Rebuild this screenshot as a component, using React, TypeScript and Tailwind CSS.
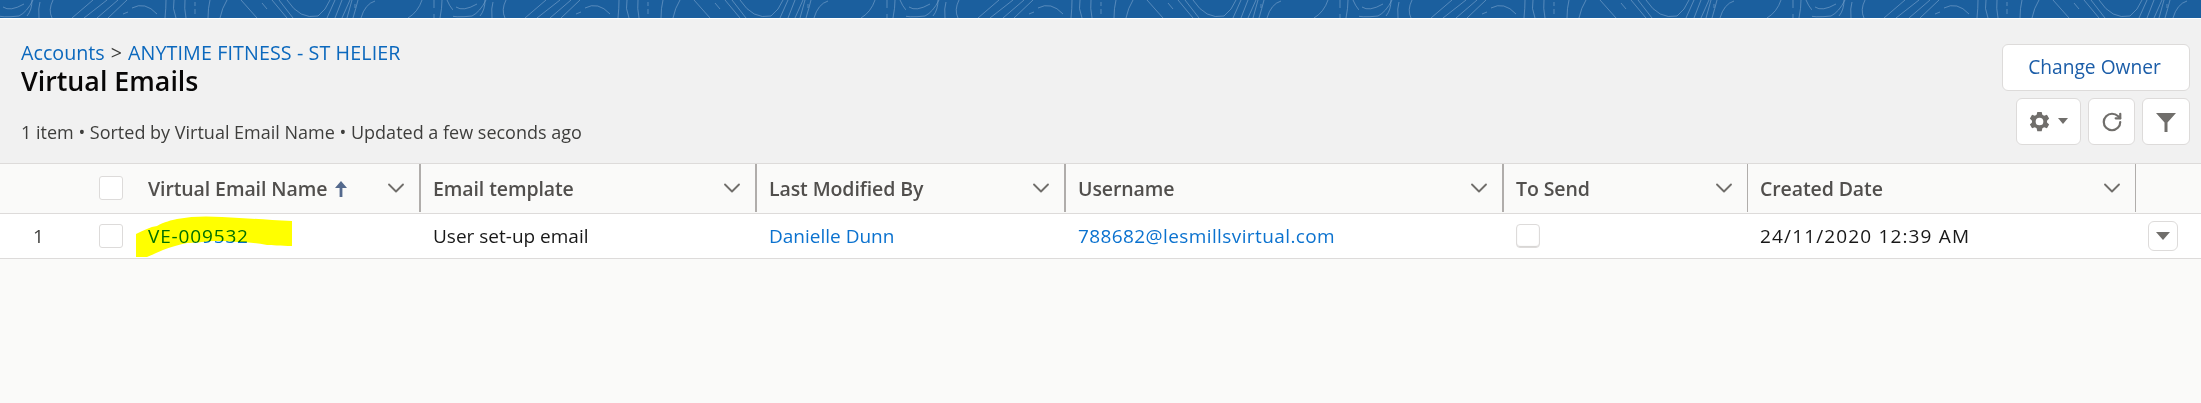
import React from "react";
import { ChevronDown, RotateCw } from "lucide-react";

const sans = "font-['Open_Sans','Noto_Sans',sans-serif]";

// Curves of the topographic banner, the tile repeats every 453px
const BannerCurves = () => (
  <svg className="block h-[18px] w-full" aria-hidden="true">
    <defs>
      <pattern id="topo" width="453" height="18" patternUnits="userSpaceOnUse">
        <g fill="none" stroke="#6f9cc8" strokeOpacity="0.7" strokeWidth="1">
          <path d="M3 7 Q10 12 24 4" />
          <path d="M27 16 Q32 10 32 0" />
          <path d="M39 18 Q38 8 40 2" />
          <path d="M52 18 Q48 10 53 0" />
          <path d="M72 18 L93 0" />
          <path d="M84 18 L107 0" />
          <path d="M97 18 L118 0" />
          <path d="M108 18 L127 0" />
          <path d="M123 14 L128 12" />
          <path d="M132 8 Q145 1 157 14" />
          <path d="M165 18 Q166 8 166 0" />
          <path d="M176 18 Q172 8 174 0" />
          <path d="M186 18 Q184 8 185 0" />
          <path d="M195 14 V9 M195 6 V2" />
          <path d="M208 18 Q208 8 210 0" />
          <path d="M220 18 Q222 8 227 0" />
          <path d="M241 0 L257 18" />
          <path d="M262 3 L267 9" />
          <path d="M272 0 L287 18" />
          <path d="M279 0 L293 18" />
          <path d="M287 0 Q300 20 318 16 Q326 10 330 0" />
          <path d="M327 18 L335 0" />
          <path d="M335 18 L342 0" />
          <path d="M342 18 L350 0" />
          <path d="M347 18 L352 0" />
          <path d="M355 8 V4" />
          <path d="M353 18 Q356 8 358 0" />
          <path d="M361 18 Q365 4 375 1" />
          <path d="M408 18 Q418 12 422 0" />
          <path d="M434 18 V14 M434 8 V0" />
          <path d="M440 18 Q442 8 442 0" />
          <path d="M447 0 Q452 12 460 15" />
          <path d="M-6 15 Q2 18 19 16 Q27 12 33 0" />
        </g>
      </pattern>
    </defs>
    <rect width="100%" height="18" fill="#1b5f9e" />
    <rect width="100%" height="18" fill="url(#topo)" />
  </svg>
);

const IconButton = ({ children, className }: { children: React.ReactNode; className: string }) => (
  <button className={`flex h-[47px] items-center justify-center rounded-md border border-[#dddbda] bg-white ${className}`}>
    {children}
  </button>
);

const Checkbox = ({ className = "" }: { className?: string }) => (
  <span className={`block h-[24px] w-[24px] rounded-[3px] border border-[#dddbda] bg-white ${className}`} />
);

const columns = [
  { label: "Email template", line: "border-[#b0adab] border-r-2" },
  { label: "Last Modified By", line: "border-[#b0adab] border-r-2" },
  { label: "Username", line: "border-[#b0adab] border-r-2" },
  { label: "To Send", line: "border-[#b0adab] border-r" },
  { label: "Created Date", line: "border-[#b0adab] border-r" },
];

const HeaderCell = ({ label, line, sorted }: { label: string; line: string; sorted?: boolean }) => (
  <div className={`flex h-[48px] items-center justify-between pr-[9px] ${sorted ? "pl-[13px]" : "pl-[12px]"} ${line}`}>
    <span className="flex items-center gap-[8px] pt-[1px] text-[19.5px] font-semibold tracking-[-0.1px] text-[#514f4d]">
      {label}
      {sorted && (
        <svg viewBox="0 0 12 16" className="h-[16px] w-[12px]" fill="#54698d">
          <path d="M6 0l6 7H7.4v9H4.6V7H0z" />
        </svg>
      )}
    </span>
    <ChevronDown className="h-[28px] w-[28px] text-[#706e6b]" strokeWidth={1.6} />
  </div>
);

export default function App() {
  return (
    <div className={`flex h-[403px] w-[2201px] flex-col overflow-hidden bg-[#fafaf9] ${sans}`}>
      <BannerCurves />
      <div className="h-px bg-white" />

      <header className="flex h-[145px] justify-between border-b border-[#dddbda] bg-[#f1f1f1] pl-[21px] pr-[11px]">
        <div className="flex flex-col pt-[21px]">
          <div className="flex items-center gap-[6px] text-[19.7px] leading-[25px] text-[#0b68bd]">
            <span>Accounts</span>
            <span className="text-[#3e3e3c]">&gt;</span>
            <span className="tracking-[0.1px]">ANYTIME FITNESS - ST HELIER</span>
          </div>
          <h1 className="text-[26.8px] font-semibold leading-[32px] text-[#080707]">Virtual Emails</h1>
          <p className="mt-[22px] text-[18px] leading-[26px] text-[#3e3e3c]">
            1 item • Sorted by Virtual Email Name • Updated a few seconds ago
          </p>
        </div>
        <div className="flex flex-col items-end gap-[7px] pt-[25px]">
          <button className="h-[47px] w-[188px] rounded-md border border-[#dddbda] bg-white pr-[3px] text-[19.2px] text-[#1b5da8]">
            Change Owner
          </button>
          <div className="flex gap-[7px]">
            <IconButton className="w-[65px] gap-[8px] pb-[1px]">
              <svg viewBox="0 0 24 24" className="h-[21px] w-[21px]" fill="#706e6b">
                <path
                  fillRule="evenodd"
                  d="M9.5 1h5l.8 3.2 2 1.1 3.2-.9 2.5 4.3-2.4 2.3v2l2.4 2.3-2.5 4.3-3.2-.9-2 1.1-.8 3.2h-5l-.8-3.2-2-1.1-3.2.9L1 15.3l2.4-2.3v-2L1 8.7l2.5-4.3 3.2.9 2-1.1zM12 7.6a4.4 4.4 0 1 0 0 8.8 4.4 4.4 0 0 0 0-8.8z"
                />
              </svg>
              <svg viewBox="0 0 10 6" className="h-[6px] w-[10px]" fill="#706e6b">
                <path d="M0 0h10L5 6z" />
              </svg>
            </IconButton>
            <IconButton className="w-[47px]">
              <RotateCw className="h-[22px] w-[22px] text-[#706e6b]" strokeWidth={2.4} />
            </IconButton>
            <IconButton className="w-[48px]">
              <svg viewBox="0 0 20 20" className="h-[20px] w-[20px]" fill="#706e6b">
                <path d="M0 1h20l-8.5 9.5V20h-3v-9.5z" />
              </svg>
            </IconButton>
          </div>
        </div>
      </header>

      <div className="grid grid-cols-[87px_48px_286px_336px_309px_438px_244px_388px_65px] border-b border-[#dddbda] bg-[#fafaf9] pb-px">
        <div />
        <div className="flex items-center justify-center">
          <Checkbox />
        </div>
        <HeaderCell label="Virtual Email Name" line="border-[#b0adab] border-r-2" sorted />
        {columns.map((c) => (
          <HeaderCell key={c.label} label={c.label} line={c.line} />
        ))}
        <div />
      </div>

      <div className="grid h-[45px] grid-cols-[87px_48px_286px_336px_309px_438px_244px_388px_65px] items-center border-b border-[#dddbda] bg-white text-[19px] text-[#181818]">
        <span className="pl-[33px] text-[#3e3e3c]">1</span>
        <div className="flex justify-center">
          <Checkbox />
        </div>
        <div className="relative h-full pl-[13px] leading-[44px] tracking-[0.85px] text-[#0070d2]">
          VE-009532
          {/* marker pen stroke drawn over the row */}
          <svg
            viewBox="0 0 157 42"
            className="absolute left-[1px] top-[1px] h-[42px] w-[157px] mix-blend-multiply"
            aria-hidden="true"
          >
            <path
              fill="#ffff00"
              d="M0 42V19C8 15 14 12 21 11 28 7 36 5 41 4 56 1 72 1 86 2 110 3 130 5 156 6V31C145 31 135 30 131 30 120 28 110 27 102 27 92 26 82 26 77 26 66 27 58 28 51 28 42 30 34 32 27 35 20 38 16 40 11 42z"
            />
          </svg>
        </div>
        <span className="pl-[12px]">User set-up email</span>
        <span className="pl-[12px] text-[#0b72cf]">Danielle Dunn</span>
        <span className="pl-[12px] tracking-[0.4px] text-[#0b72cf]">788682@lesmillsvirtual.com</span>
        <div className="pl-[12px]">
          <Checkbox className="rounded-[4px] border-[#bdbbb9] shadow-[inset_0_-1px_1px_#d4d2d0]" />
        </div>
        <span className="pl-[12px] tracking-[1.15px]">24/11/2020 12:39 AM</span>
        <div className="pl-[12px]">
          <button className="flex h-[30px] w-[30px] items-center justify-center rounded-md border border-[#dddbda] bg-white">
            <svg viewBox="0 0 14 8" className="h-[8px] w-[14px]" fill="#706e6b">
              <path d="M0 0h14L7 8z" />
            </svg>
          </button>
        </div>
      </div>
    </div>
  );
}
